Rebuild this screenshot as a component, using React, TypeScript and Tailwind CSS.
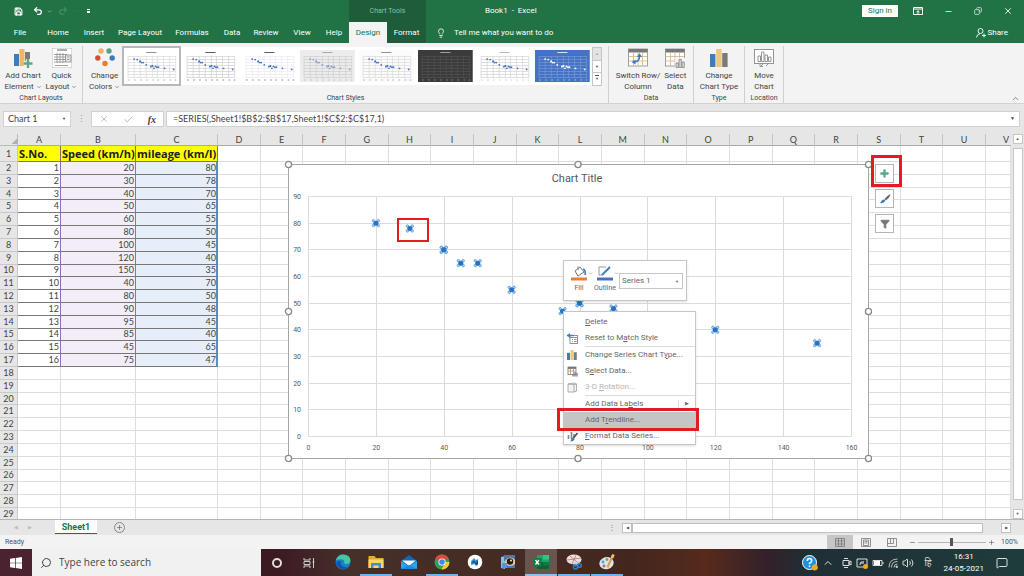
import React from 'react';
import {
  Save, Undo2, Redo2, ChevronDown, ChevronUp, Lightbulb, X, Check, Search,
  Minus, Plus, Copy, Filter, Volume2, MessageSquare,
} from 'lucide-react';

const TABS = [
  { name: 'File', cls: 'w-10' },
  { name: 'Home', cls: 'w-9' },
  { name: 'Insert', cls: 'w-9' },
  { name: 'Page Layout', cls: 'w-14' },
  { name: 'Formulas', cls: 'w-12' },
  { name: 'Data', cls: 'w-8' },
  { name: 'Review', cls: 'w-9' },
  { name: 'View', cls: 'w-9' },
  { name: 'Help', cls: 'w-7' },
];

const DATA: number[][] = [
  [20, 80], [30, 78], [40, 70], [50, 65], [60, 55], [80, 50], [100, 45], [120, 40],
  [150, 35], [40, 70], [80, 50], [90, 48], [95, 45], [85, 40], [45, 65], [75, 47],
];

const COLUMNS = 'ABCDEFGHIJKLMNOPQRSTUV'.split('');
const EMPTY_COLUMNS = COLUMNS.slice(3);
const ROWS = Array.from({ length: 28 }, (_, i) => i + 2);

const THUMBS = [
  { bg: '#ffffff', grid: '#d4d4d4', dot: '#4472c4', text: '#777777' },
  { bg: '#ffffff', grid: '#c8c8c8', dot: '#4472c4', text: '#333333' },
  { bg: '#ffffff', grid: '#e4e8f2', dot: '#4472c4', text: '#333333' },
  { bg: '#ececec', grid: '#c9c9c9', dot: '#8f9fc4', text: '#999999' },
  { bg: '#fbfbfb', grid: '#d6d6d6', dot: '#4472c4', text: '#777777' },
  { bg: '#3b3b3b', grid: '#555555', dot: '#474747', text: '#bbbbbb' },
  { bg: '#ffffff', grid: '#cccccc', dot: '#4472c4', text: '#aaaaaa' },
  { bg: '#4472c4', grid: '#7f9fd8', dot: '#ffffff', text: '#ffffff' },
];

const Thumb: React.FC<{ style: (typeof THUMBS)[number] }> = ({ style }) => (
  <svg viewBox="0 0 54 32" className="block h-8 w-full" preserveAspectRatio="none">
    <rect width="54" height="32" fill={style.bg} />
    <rect x="22" y="2" width="10" height="1" fill={style.text} opacity="0.8" />
    {[6, 9, 12, 15, 18, 21, 24, 27].map((y) => (
      <path key={y} d={`M4 ${y}.5H51`} stroke={style.grid} strokeWidth="0.6" />
    ))}
    {[4, 10, 16, 22, 28, 33, 39, 45, 51].map((x) => (
      <path key={x} d={`M${x} 6.5V28`} stroke={style.grid} strokeWidth="0.6" />
    ))}
    {[4, 10, 16, 22, 28, 33, 39, 45, 50].map((x) => (
      <rect key={x} x={x} y="29.5" width="1.5" height="1" fill={style.text} opacity="0.6" />
    ))}
    {DATA.map(([x, y], i) => (
      <circle key={i} cx={4 + x * 0.3} cy={27.5 - y * 0.23} r="0.9" fill={style.dot} />
    ))}
  </svg>
);

const BarsIcon: React.FC<{ className?: string }> = ({ className }) => (
  <svg viewBox="0 0 18 18" className={className}>
    <rect x="0" y="5" width="5.4" height="13" fill="#3f7cb8" />
    <rect x="6.2" y="0" width="5.4" height="18" fill="#ecc77c" />
    <rect x="12.2" y="4" width="5.4" height="14" fill="#7b7b7b" />
  </svg>
);

const AddElementIcon = () => (
  <svg viewBox="0 0 20 20" className="h-5 w-5">
    <rect x="1" y="6" width="5" height="12" fill="#3f7cb8" />
    <rect x="6.5" y="1" width="5" height="17" fill="#ecb865" />
    <rect x="12" y="4" width="5" height="13" fill="#7b7b7b" />
    <path d="M15 11v9M10.500 15.500h9" stroke="#f3f3f3" strokeWidth="4.500" />
    <path d="M15 11v9M10.500 15.500h9" stroke="#5fa588" strokeWidth="2.400" />
  </svg>
);

const QuickLayoutIcon = () => (
  <svg viewBox="0 0 20 20" className="h-5 w-5" fill="none" stroke="#8a8a8a" strokeWidth="0.8">
    <rect x="0" y="0" width="20" height="20" fill="#fff" stroke="#aaa" />
    <path d="M5 2h10" strokeWidth="1.4" />
    <path d="M2 6.500h13M2 9h13M2 11.500h13M2 14h11M5 5v10M8 5v10M11 5v10" />
    <rect x="13.500" y="7" width="5.500" height="7" fill="#e8e8e8" />
    <path d="M15 9h2.500M15 11.500h2.500M3 17.500h13" />
  </svg>
);

const ColorsIcon = () => (
  <svg viewBox="0 0 20 20" className="h-5 w-5">
    <circle cx="6" cy="3" r="2.700" fill="#ecb065" />
    <circle cx="14" cy="3" r="2.700" fill="#5c9f87" />
    <circle cx="2.800" cy="10" r="2.700" fill="#cf5234" />
    <circle cx="17.200" cy="10" r="2.700" fill="#3f78b8" />
    <circle cx="10" cy="15.500" r="2.700" fill="#e57f2b" />
  </svg>
);

const GridSheet = () => (
  <>
    <rect x="0.500" y="1" width="19" height="17" fill="#fff" stroke="#8a8a8a" strokeWidth="0.800" />
    <rect x="0.500" y="1" width="19" height="3.500" fill="#777" />
    <path d="M1 8.500h18M1 13h18M5.500 5v13M10 5v13M14.500 5v13" stroke="#d8b98c" strokeWidth="0.900" />
  </>
);

const SwitchIcon = () => (
  <svg viewBox="0 0 20 20" className="h-5 w-5" fill="none">
    <GridSheet />
    <path d="M6 14q5.500 0 5.500-6" stroke="#3f7cb8" strokeWidth="1.600" />
    <path d="M9 9l2.500-4L14 9zM7.500 11.500l-4 2.500 4 2.500z" fill="#3f7cb8" />
  </svg>
);

const SelectDataIcon = () => (
  <svg viewBox="0 0 20 20" className="h-5 w-5" fill="none">
    <GridSheet />
    <rect x="10" y="10" width="10" height="10" fill="#f3f3f3" />
    <path d="M11 15h2.300v4.500H11zM14 11.500h2.300v8H14zM17 14h2.300v5.500H17z" fill="#ddd" stroke="#777" strokeWidth="0.700" />
  </svg>
);

const MoveIcon = () => (
  <svg viewBox="0 0 20 20" className="h-5 w-5" fill="none" stroke="#8a8a8a" strokeWidth="0.900">
    <rect x="0.500" y="1.500" width="19" height="14" fill="#fff" />
    <path d="M4 8h2.500v5.500H4zM7.500 4H10v9.500H7.500zM11 7h2.500v6.500H11zM14.500 9H17v4.500h-2.500z" />
    <path d="M6 15.500v3h3M9 15.500l-2 3M12 18l3-3" />
  </svg>
);

const RibbonButton: React.FC<{ icon: React.ReactNode; lines: string[]; menu?: boolean }> = ({ icon, lines, menu }) => (
  <button className="flex flex-col items-center pt-0.5 text-[8px] leading-[11px] whitespace-nowrap text-[#444]">
    <span className="mb-0.5 flex h-5 items-center">{icon}</span>
    <span>{lines[0]}</span>
    <span className="flex items-center gap-[2px]">
      {lines[1]}
      {menu && <ChevronDown size={6} />}
    </span>
  </button>
);

const Group: React.FC<{ label: string; className?: string; children: React.ReactNode }> = ({ label, className, children }) => (
  <section className={`mt-[3px] flex flex-col justify-between border-r border-[#cfcfcf] ${className}`}>
    <div className="flex justify-center">{children}</div>
    <h2 className="text-center text-[7px] leading-[9px] text-[#444]">{label}</h2>
  </section>
);

const UserIcon = () => (
  <svg viewBox="0 0 10 10" className="h-2.5 w-2.5" fill="none" stroke="#fff" strokeWidth="0.900">
    <circle cx="4.500" cy="3" r="2.500" />
    <path d="M.5 9.500Q1 6 4 5.700M8 5.500v4M6 7.500h4" />
  </svg>
);

const TitleBar = () => (
  <header className="h-[43px] shrink-0 bg-[#217346] text-white">
    <div className="flex h-[22px] items-center">
      <div className="flex w-[349px] items-center">
        <button aria-label="Save" className="ml-3.5"><Save size={9} strokeWidth={3} /></button>
        <button aria-label="Undo" className="ml-2.5"><Undo2 size={10} strokeWidth={3} /></button>
        <ChevronDown size={5} className="ml-1" />
        <button aria-label="Redo" className="ml-1.5 text-[#4b8f6a]"><Redo2 size={10} strokeWidth={2.5} /></button>
        <ChevronDown size={5} className="ml-1 text-[#4b8f6a]" />
        <button aria-label="Customize toolbar" className="ml-2.5 flex flex-col items-center gap-px">
          <span className="h-px w-[3px] bg-white" />
          <span className="h-0.5 w-[3px] bg-white" />
        </button>
      </div>
      <div className="flex h-full w-[77px] items-center justify-center bg-[#1e5c3a] text-[7px] text-[#8fbfa3]">Chart Tools</div>
      <h1 className="ml-[59px] flex-1 text-[8px] whitespace-pre">Book1  -  Excel</h1>
      <div className="flex items-center">
        <button className="h-3 w-9 bg-white text-[8px] leading-[12px] text-[#217346]">Sign in</button>
        <button aria-label="Ribbon display options" className="ml-[15px]">
          <svg viewBox="0 0 10 8" className="h-2 w-2.5" fill="none" stroke="#fff"><path d="M.5.500h9v7h-9zM.5 2h9M5 7V4M3.500 5L5 3.700 6.500 5" /></svg>
        </button>
        <button aria-label="Minimize" className="ml-[21px]"><Minus size={9} /></button>
        <button aria-label="Restore" className="ml-[21px]"><Copy size={8} className="rotate-90" /></button>
        <button aria-label="Close" className="mr-[11px] ml-[21px]"><X size={10} /></button>
      </div>
    </div>
    <nav className="flex h-[21px] items-stretch text-[8px]">
      <div className="flex w-[349px] items-stretch">
        {TABS.map((tab) => (
          <button key={tab.name} className={`${tab.cls} whitespace-nowrap`}>{tab.name}</button>
        ))}
      </div>
      <button className="w-[38px] bg-[#f3f3f3] text-[#217346]">Design</button>
      <button className="w-[39px] bg-[#1e5c3a]">Format</button>
      <button className="ml-2.5 flex flex-1 items-center gap-2">
        <Lightbulb size={10} />
        Tell me what you want to do
      </button>
      <button className="mr-4 flex items-center gap-0.5"><UserIcon />Share</button>
    </nav>
  </header>
);

const Ribbon = () => (
  <div className="flex h-[61px] shrink-0 border-b border-[#d2d2d2] bg-[#f3f3f3]">
    <Group label="Chart Layouts" className="w-[83px]">
      <div className="flex gap-1">
        <RibbonButton icon={<AddElementIcon />} lines={['Add Chart', 'Element']} menu />
        <RibbonButton icon={<QuickLayoutIcon />} lines={['Quick', 'Layout']} menu />
      </div>
    </Group>
    <Group label="Chart Styles" className="w-[526px]">
      <div className="flex w-full pr-1.5 pl-1.5">
        <RibbonButton icon={<ColorsIcon />} lines={['Change', 'Colors']} menu />
        <div className="mt-px ml-0.5 flex h-[38px] flex-1 items-center bg-white">
          {THUMBS.map((style, i) => (
            <button key={i} aria-label={`Style ${i + 1}`} className={`flex-1 border-2 ${i === 0 ? 'border-[#b8b8b8] py-0.5' : 'border-transparent'}`}>
              <Thumb style={style} />
            </button>
          ))}
        </div>
        <div className="mt-px flex h-[39px] w-2.5 flex-col border border-[#c6c6c6] bg-white text-[4px] text-[#555]">
          <button aria-label="Previous styles" className="flex-1 bg-[#e3e3e3] text-[#aaa]">▲</button>
          <button aria-label="Next styles" className="flex-1 border-y border-[#c6c6c6]">▼</button>
          <button aria-label="More styles" className="flex-1"><span className="border-t border-[#555]">▼</span></button>
        </div>
      </div>
    </Group>
    <Group label="Data" className="w-[85px]">
      <div className="flex gap-1">
        <RibbonButton icon={<SwitchIcon />} lines={['Switch Row/', 'Column']} />
        <RibbonButton icon={<SelectDataIcon />} lines={['Select', 'Data']} />
      </div>
    </Group>
    <Group label="Type" className="w-[51px]">
      <RibbonButton icon={<BarsIcon className="h-[18px] w-[18px]" />} lines={['Change', 'Chart Type']} />
    </Group>
    <Group label="Location" className="w-[39px]">
      <RibbonButton icon={<MoveIcon />} lines={['Move', 'Chart']} />
    </Group>
    <button aria-label="Collapse the ribbon" className="mr-1 ml-auto self-end text-[#666]"><ChevronUp size={9} /></button>
  </div>
);

const FormulaBar = () => (
  <div className="flex h-[30px] shrink-0 items-center bg-[#e6e6e6] pr-1 pl-[3px] font-['Lato',sans-serif] text-[9px] text-[#444]">
    <div className="flex h-4 w-[68px] items-center border border-[#d0d0d0] bg-white px-1">
      <input aria-label="Name box" defaultValue="Chart 1" className="min-w-0 flex-1 bg-transparent outline-none" />
      <span className="text-[4px]">▼</span>
    </div>
    <span className="w-5 text-center text-[#999]">⋮</span>
    <div className="flex h-4 w-[73px] items-center justify-between border border-[#d0d0d0] bg-white px-[7px]">
      <button aria-label="Cancel" className="text-[#b0b0b0]"><X size={10} /></button>
      <button aria-label="Enter" className="text-[#b0b0b0]"><Check size={11} /></button>
      <button className="font-['Liberation_Serif',serif] text-[10px] font-bold italic">fx</button>
    </div>
    <div className="ml-0.5 flex h-4 flex-1 items-center border border-[#d0d0d0] bg-white pr-1 pl-1.5">
      <input aria-label="Formula bar" defaultValue="=SERIES(,Sheet1!$B$2:$B$17,Sheet1!$C$2:$C$17,1)" className="min-w-0 flex-1 bg-transparent outline-none" />
      <span className="text-[5px]">▼</span>
    </div>
  </div>
);

const SheetTable = () => (
  <table className="h-[calc(100%+2px)] w-full table-fixed border-separate border-spacing-0 font-['Lato',sans-serif] text-[9px] leading-[10px] text-[#444]">
    <colgroup>
      <col className="w-[18px]" />
      <col className="w-[43px]" />
      <col className="w-[75px]" />
      <col className="w-[82px]" />
      {EMPTY_COLUMNS.map((c) => <col key={c} className={c === 'V' ? 'w-[25px]' : ''} />)}
    </colgroup>
    <thead>
      <tr className="h-3 bg-[#e6e6e6]">
        <th className="border-r border-b border-[#bbb] p-0 text-right"><span className="block text-[7px] leading-[8px] text-[#b0b0b0]">◢</span></th>
        {COLUMNS.map((c) => (
          <th key={c} className={`border-b border-[#aaa] p-0 font-normal ${c === 'V' ? 'pr-0.5 text-right' : 'border-r border-r-[#c4c4c4]'}`}>{c}</th>
        ))}
      </tr>
    </thead>
    <tbody>
      <tr className="h-4">
        <th className="border-r border-b border-[#c9c9c9] bg-[#e6e6e6] p-0 font-normal">1</th>
        {['S.No.', 'Speed (km/h)', 'mileage (km/l)'].map((h) => (
          <td key={h} className="border-r border-b border-[#777] bg-[#ffff00] p-0 pl-px font-['Open_Sans',sans-serif] text-[11px] leading-[14px] font-bold whitespace-nowrap text-[#222]">{h}</td>
        ))}
        {EMPTY_COLUMNS.map((c) => <td key={c} className="border-r border-b border-[#dedede] p-0" />)}
      </tr>
      {ROWS.map((row) => {
        const point = DATA[row - 2];
        return (
          <tr key={row}>
            <th className="border-r border-b border-[#c9c9c9] bg-[#e6e6e6] p-0 font-normal">{row}</th>
            {point ? (
              <>
                <td className="border-r border-b border-r-[#8f6fb8] border-b-[#777] p-0 pr-px text-right">{row - 1}</td>
                <td className="border-r border-b border-r-[#8f6fb8] border-b-[#777] bg-[#f2edf7] p-0 pr-px text-right">{point[0]}</td>
                <td className="border-r-2 border-b border-r-[#5b8dbd] border-b-[#777] bg-[#e6eff9] p-0 text-right">{point[1]}</td>
              </>
            ) : (
              <>
                <td className="border-r border-b border-[#dedede] p-0" />
                <td className="border-r border-b border-[#dedede] p-0" />
                <td className="border-r border-b border-[#dedede] p-0" />
              </>
            )}
            {EMPTY_COLUMNS.map((c) => <td key={c} className="border-r border-b border-[#dedede] p-0" />)}
          </tr>
        );
      })}
    </tbody>
  </table>
);

const px = (v: number) => 24.5 + v * 3.394;
const py = (v: number) => 276.5 - v * 2.667;

const Marker: React.FC<{ x: number; y: number }> = ({ x, y }) => (
  <g transform={`translate(${px(x) - 0.5} ${py(y)})`}>
    {[[-2.4, -2.4], [2.4, -2.4], [-2.4, 2.4], [2.4, 2.4]].map(([dx, dy], i) => (
      <circle key={i} cx={dx} cy={dy} r="1.300" fill="#a9d2f2" stroke="#4a98da" strokeWidth="0.700" />
    ))}
    <circle r="2.500" fill="#2b70c2" />
  </g>
);

const Chart = () => (
  <svg width="588" height="303" viewBox="0 0 588 303" className="block" fontSize="7" fill="#595959">
    <rect x="4.500" y="4.500" width="580" height="294" fill="#fff" stroke="#a6a6a6" />
    <text x="293" y="22" textAnchor="middle" fontSize="11">Chart Title</text>
    {[0, 10, 20, 30, 40, 50, 60, 70, 80, 90].map((v) => (
      <g key={v}>
        <path d={`M24.500 ${Math.floor(py(v)) + 0.5}H567.500`} stroke="#dcdcdc" />
        <text x="17" y={py(v) + 2.5} textAnchor="end">{v}</text>
      </g>
    ))}
    {[0, 20, 40, 60, 80, 100, 120, 140, 160].map((v) => (
      <g key={v}>
        <path d={`M${Math.floor(px(v)) + 0.5} 36.500V276.500`} stroke="#dcdcdc" />
        <text x={px(v)} y="290" textAnchor="middle">{v}</text>
      </g>
    ))}
    {DATA.map(([x, y], i) => <Marker key={i} x={x} y={y} />)}
    {[[4.5, 4.5], [294, 4.5], [584.5, 4.5], [4.5, 151.5], [584.5, 151.5], [4.5, 298.5], [294, 298.5], [584.5, 298.5]].map(([x, y], i) => (
      <circle key={i} cx={x} cy={y} r="3.100" fill="#fff" stroke="#8a8a8a" strokeWidth="1.300" />
    ))}
  </svg>
);

const ResetIcon = () => (
  <svg viewBox="0 0 11 11" className="h-[11px] w-[11px]" fill="none">
    <rect x="3" y="2.500" width="7.500" height="8" fill="#fff" stroke="#777" strokeWidth="0.800" />
    <path d="M3 4.500h7M5 6.500h1M7 6.500h2.500M5 8.500h1M7 8.500h2.500" stroke="#777" strokeWidth="0.800" />
    <path d="M0 2.500h6.500" stroke="#3f7cb8" strokeWidth="1.500" />
    <path d="M3 0L0 2.500 3 5z" fill="#3f7cb8" />
  </svg>
);

const TableIcon = () => (
  <svg viewBox="0 0 11 11" className="h-[11px] w-[11px]" fill="none">
    <rect x="1" y="1" width="8" height="7.500" fill="#fff" stroke="#777" strokeWidth="0.800" />
    <path d="M1 2h8" stroke="#666" strokeWidth="1.600" />
    <path d="M1 5h8M3.500 3v5M6.500 3v5" stroke="#c98b6a" strokeWidth="0.800" />
    <path d="M6 10.500V8M8 10.500V6M10 10.500V7" stroke="#777" strokeWidth="1.300" />
  </svg>
);

const CubeIcon = () => (
  <svg viewBox="0 0 11 11" className="h-[11px] w-[11px]" fill="#f6f1f6" stroke="#a9a3ab" strokeWidth="0.900">
    <path d="M1 2l6-1 2.500 1v7L7 10H1zM7 2.500V10M1 2l6 .5L9.500 2" />
  </svg>
);

const FormatIcon = () => (
  <svg viewBox="0 0 11 11" className="h-[11px] w-[11px]" fill="none">
    <path d="M1.500 8V4M4.500 8V1M7 7V3" stroke="#888" strokeWidth="1.600" />
    <path d="M10.500 2L6 7.500" stroke="#555" strokeWidth="1.800" />
    <path d="M6.500 6.500Q4 7 3.500 10.500 7 10 7.500 8z" fill="#3f7cb8" />
  </svg>
);

const MENU: { pre: string; key: string; post: string; icon?: React.ReactNode; state?: string; sub?: boolean; rule?: boolean }[] = [
  { pre: '', key: 'D', post: 'elete' },
  { pre: 'Reset to M', key: 'a', post: 'tch Style', icon: <ResetIcon />, rule: true },
  { pre: 'Change Series Chart T', key: 'y', post: 'pe...', icon: <BarsIcon className="h-[10px] w-[10px]" /> },
  { pre: 'S', key: 'e', post: 'lect Data...', icon: <TableIcon /> },
  { pre: '3-D ', key: 'R', post: 'otation...', icon: <CubeIcon />, state: 'text-[#b5b5b5]', rule: true },
  { pre: 'Add Data La', key: 'b', post: 'els', sub: true },
  { pre: 'Add T', key: 'r', post: 'endline...', state: 'bg-[#c5c5c5]' },
  { pre: '', key: 'F', post: 'ormat Data Series...', icon: <FormatIcon /> },
];

const ContextMenu = () => (
  <ul className="w-[133px] border border-[#c6c6c6] bg-white pt-0.5 text-[8px] text-[#666] shadow-sm">
    {MENU.map((item) => (
      <li key={item.key}>
        <button className={`flex h-4 w-full items-center text-left whitespace-nowrap ${item.state ?? ''}`}>
          <span className="flex w-[21px] pl-[3px]">{item.icon}</span>
          <span className="flex-1">{item.pre}<u>{item.key}</u>{item.post}</span>
          {item.sub && <span className="mr-1.5 border-l border-[#e0e0e0] pl-1.5 text-[5px]">▶</span>}
        </button>
        {item.rule && <hr className="ml-[21px] border-[#dcdcdc]" />}
      </li>
    ))}
  </ul>
);

const MiniToolbar = () => (
  <div className="flex h-[41px] w-[124px] border border-[#c6c6c6] bg-white pt-1 pl-1.5 text-[7px] text-[#666] shadow-sm">
    <button className="flex w-[26px] flex-col items-start">
      <span className="flex items-center">
        <svg viewBox="0 0 18 16" className="h-4 w-[18px]" fill="none">
          <path d="M5 6l5-4 4 5-6 4z" fill="#fff" stroke="#777" />
          <path d="M8 5V1.500" stroke="#777" />
          <path d="M13 4q3 1 2 6" stroke="#3f7cb8" strokeWidth="1.600" />
          <path d="M1 14h16" stroke="#ed7d31" strokeWidth="3" />
        </svg>
        <ChevronDown size={5} />
      </span>
      <span className="w-[18px] pt-0.5 text-center">Fill</span>
    </button>
    <button className="flex w-[23px] flex-col items-start">
      <span className="flex items-center">
        <svg viewBox="0 0 18 16" className="h-4 w-[18px]" fill="none">
          <path d="M10 2H3v8h3" stroke="#999" />
          <path d="M14 2L6 10" stroke="#3f7cb8" strokeWidth="2" />
          <path d="M1 14h16" stroke="#4472c4" strokeWidth="3" />
        </svg>
        <ChevronDown size={5} />
      </span>
      <span className="flex w-[18px] justify-center pt-0.5 whitespace-nowrap">Outline</span>
    </button>
    <div className="relative mt-2 h-4 w-16">
      <select aria-label="Chart element" className="h-4 w-full appearance-none border border-[#c6c6c6] bg-white pl-0.5 text-[8px] leading-[14px]">
        <option>Series 1</option>
      </select>
      <span className="pointer-events-none absolute top-1.5 right-1 text-[4px] leading-[5px]">▼</span>
    </div>
  </div>
);

const SIDE = 'flex h-[19px] w-[19px] items-center justify-center border border-[#b5b5b5] bg-white';

const Sheet = () => (
  <main className="flex min-h-0 flex-1 bg-white">
    <div className="relative min-w-0 flex-1 overflow-hidden">
      <SheetTable />
      <div className="absolute top-[26px] left-[284px]"><Chart /></div>
      <div className="absolute top-[30px] left-[875px] flex flex-col gap-[6px]">
        <button aria-label="Chart elements" className={SIDE}><Plus size={11} strokeWidth={5} className="text-[#5fa588]" /></button>
        <button aria-label="Chart style" className={SIDE}>
          <svg viewBox="0 0 12 12" className="h-3 w-3">
            <path d="M11.500 1Q9 2 5.500 6l1.500 1.500Q11 4 11.500 1z" fill="#666" />
            <path d="M5 6.300Q3 6.500 1 10q4 .7 5.500-2.200z" fill="#3f7cb8" />
          </svg>
        </button>
        <button aria-label="Chart filters" className={SIDE}><Filter size={10} className="fill-[#777] text-[#777]" /></button>
      </div>
      <div className="absolute top-[126px] left-[563px]"><MiniToolbar /></div>
      <div className="absolute top-[177px] left-[563px]"><ContextMenu /></div>
      <div className="pointer-events-none absolute top-[84px] left-[397px] h-6 w-8 border-2 border-[#e31b23]" />
      <div className="pointer-events-none absolute top-[21px] left-[871px] h-8 w-[31px] border-3 border-[#e31b23]" />
      <div className="pointer-events-none absolute top-[274px] left-[557px] h-[23px] w-[142px] border-3 border-[#e31b23]" />
    </div>
    <div className="flex w-[13px] flex-col items-center bg-[#e6e6e6] text-[4px] text-[#555]">
      <button aria-label="Scroll up" className="h-2.5 w-2.5 border border-[#c6c6c6] bg-white">▲</button>
      <div className="my-1 h-[352px] w-2.5 border border-[#c6c6c6] bg-white" />
      <button aria-label="Scroll down" className="mt-auto h-2.5 w-2.5 border border-[#c6c6c6] bg-white">▼</button>
    </div>
  </main>
);

const SheetTabs = () => (
  <div className="flex h-4 shrink-0 items-center border-t border-[#b5b5b5] bg-[#e6e6e6] text-[#555]">
    <div className="flex w-[55px] gap-2.5 pl-3.5 text-[5px] text-[#bbb]"><span>◀</span><span>▶</span></div>
    <button className="h-[14px] w-[42px] self-start border-b border-[#217346] bg-white text-[9px] leading-[12px] font-bold text-[#217346]">Sheet1</button>
    <button aria-label="New sheet" className="ml-[17px] flex h-[11px] w-[11px] items-center justify-center rounded-full border border-[#888]"><Plus size={7} /></button>
    <span className="ml-auto w-[14px] text-[8px] text-[#888]">⋮</span>
    <div className="mr-[13px] flex w-[389px] items-center text-[4px]">
      <button aria-label="Scroll left" className="h-2.5 w-2.5 border border-[#c0c0c0] bg-white">◀</button>
      <div className="h-2.5 w-[351px] border border-[#c0c0c0] bg-white" />
      <button aria-label="Scroll right" className="ml-auto h-2.5 w-2.5 border border-[#c0c0c0] bg-white">▶</button>
    </div>
  </div>
);

const StatusBar = () => (
  <div className="flex h-[14px] shrink-0 items-center bg-[#f3f3f3] text-[7px] text-[#555]">
    <span className="flex-1 pl-[5px]">Ready</span>
    <button aria-label="Normal view" className="flex h-full w-[26px] items-center justify-center bg-[#c6c6c6]">
      <svg viewBox="0 0 10 9" className="h-[9px] w-2.5" fill="none" stroke="#777" strokeWidth="0.800"><path d="M.5.500h9v8h-9zM.5 3h9M.5 6h9M3.500.500v8M6.500.500v8" /></svg>
    </button>
    <button aria-label="Page layout view" className="flex w-[26px] justify-center">
      <svg viewBox="0 0 10 9" className="h-[9px] w-2.5" fill="none" stroke="#777" strokeWidth="0.800"><path d="M.5.500h9v8h-9zM2.500 2h5v5.500h-5zM3.500 3.500h3M3.500 5h3" /></svg>
    </button>
    <button aria-label="Page break view" className="flex w-[26px] justify-center">
      <svg viewBox="0 0 10 9" className="h-[9px] w-2.5" fill="none" stroke="#777" strokeWidth="0.800"><path d="M.5.500h9v8h-9zM3.500.500v5h3v-5M.5 5.500h3" /></svg>
    </button>
    <button aria-label="Zoom out" className="ml-1"><Minus size={7} /></button>
    <div className="relative mx-0.5 flex h-2 w-[68px] items-center">
      <div className="h-px w-full bg-[#b5b5b5]" />
      <input type="range" aria-label="Zoom" defaultValue={50} className="absolute inset-0 w-full opacity-0" />
      <span className="pointer-events-none absolute left-8 h-2 w-[3px] bg-[#555]" />
    </div>
    <button aria-label="Zoom in"><Plus size={7} /></button>
    <span className="w-[29px] pr-1.5 text-right">100%</span>
  </div>
);

const APPS: { name: string; open: string; icon: React.ReactNode }[] = [
  {
    name: 'Edge', open: 'border-transparent',
    icon: <><circle cx="8" cy="8" r="7.500" fill="#1b7fd0" /><path d="M1 6Q3 .5 8 .5q7 0 7.500 6Q15 10 11 10 8 9 9.500 7 8 4 1 6z" fill="#43c9a0" /><path d="M6 7q-2 6 7.500 6.500Q5 18 1 10q1-4 5-3z" fill="#1257a6" /></>,
  },
  {
    name: 'File Explorer', open: 'border-[#76b0e8]',
    icon: <><path d="M.5 2h6l1.500 2h7.500v10H.5z" fill="#e8ab32" /><path d="M.5 5.500h15V14H.5z" fill="#fcd56b" /><path d="M3 14V9h10v5h-2.500v-2.500h-5V14z" fill="#3b94d9" /></>,
  },
  {
    name: 'Mail', open: 'border-transparent',
    icon: <><path d="M0 7l8-6 8 6v8H0z" fill="#1565b5" /><path d="M1 6.500h14L8 12z" fill="#f2f6fa" /><path d="M0 7l8 5.500L0 15zM16 7l-8 5.500 8 2.500z" fill="#2ba4ee" /><path d="M0 15l8-4 8 4z" fill="#1e88dc" /></>,
  },
  {
    name: 'Chrome', open: 'border-[#76b0e8]',
    icon: <><circle cx="8" cy="8" r="7.500" fill="#34a056" /><path d="M8 8h7.500A7.500 7.500 0 0 1 7.500 15.500L11 9z" fill="#fbc934" /><path d="M1.500 4.200A7.500 7.500 0 0 1 14.800 5H8L5 9z" fill="#df4a3c" /><circle cx="8" cy="8" r="3.600" fill="#fff" /><circle cx="8" cy="8" r="2.800" fill="#4285f4" /></>,
  },
  {
    name: 'Notes', open: 'border-transparent',
    icon: <><circle cx="8" cy="8" r="7.300" fill="#fff" /><path d="M4 7l3-3 2 2 2-1v6l-2 1-2-2-2 1H4z" fill="#3aa0dc" /><path d="M5 8l2-2 2 3 1-3 1 1v3l-2 1-2-3-1 2z" fill="#17488c" /></>,
  },
  {
    name: 'Photo Viewer', open: 'border-transparent',
    icon: <><path d="M1 3l4-1v13l-4-1z" fill="#8dbce8" /><rect x="4" y="1" width="11" height="13" fill="#4879b5" /><path d="M4 8q6-8 11-2v4q-6 5-11-2z" fill="#e9c9a0" /><circle cx="10" cy="7.500" r="3.200" fill="#2b1a14" /><circle cx="11" cy="6.500" r="0.900" fill="#fff" /><path d="M2 9h5v5H2z" fill="#5796d6" /></>,
  },
  {
    name: 'Excel', open: 'border-[#8fc1ee] bg-[#6a5450]',
    icon: <><rect x="4" y="1" width="12" height="14" rx="1" fill="#21a366" /><path d="M10 1h6v4.500h-6z" fill="#33c481" /><path d="M4 8h12v6q0 1-1 1H4z" fill="#185c37" /><path d="M10 8h6v3.500h-6z" fill="#107c41" /><rect x="0" y="4" width="8.500" height="8.500" rx="1" fill="#107c41" /><path d="M2.500 6l3.500 4.500M6 6l-3.500 4.500" stroke="#fff" strokeWidth="1.300" /></>,
  },
  {
    name: 'Snipping Tool', open: 'border-[#76b0e8]',
    icon: <><ellipse cx="8" cy="5.500" rx="7.500" ry="5" fill="#e9e2e0" /><path d="M1 6l14-2M4 2l8 7M10 1L6 10" stroke="#c55a4a" strokeWidth="0.700" /><path d="M7 8l5 3M13 7l-4 5" stroke="#ccc" strokeWidth="1.400" /><circle cx="9.500" cy="13" r="2" fill="none" stroke="#2b7fd0" strokeWidth="1.500" /><circle cx="13.500" cy="11.500" r="1.800" fill="none" stroke="#2b7fd0" strokeWidth="1.500" /></>,
  },
  {
    name: 'Paint', open: 'border-[#76b0e8]',
    icon: <><ellipse cx="7.500" cy="9" rx="7.200" ry="6" fill="#d9e5ee" transform="rotate(-15 8 9)" /><circle cx="4" cy="8" r="1.400" fill="#4a9fe0" /><circle cx="8" cy="5.500" r="1.400" fill="#57b35a" /><circle cx="5" cy="12" r="1.400" fill="#e05a4a" /><circle cx="9" cy="12.500" r="1.400" fill="#e8b93a" /><path d="M9 12l5-11" stroke="#d8994a" strokeWidth="1.900" /><path d="M13 4l1.500-3.500" stroke="#eebf7a" strokeWidth="2.600" /></>,
  },
];

const Taskbar = () => (
  <footer className="flex h-[27px] shrink-0 items-stretch bg-[linear-gradient(90deg,#3c1a22_27%,#46302a_34%,#43271f_62%,#572a1c_69%,#33202a_75%,#1f2f35_79%,#1f3c3c_100%)] text-white">
    <button aria-label="Start" className="flex w-8 items-center justify-center bg-[#4b2230]">
      <svg viewBox="0 0 12 12" className="h-3 w-3" fill="#fff"><path d="M0 1.700l5-.7v4.700H0zM5.700.900L12 0v5.700H5.700zM0 6.300h5V11l-5-.7zM5.700 6.300H12V12l-6.300-.9z" /></svg>
    </button>
    <label className="flex w-[229px] items-center bg-[#f1f1f1] pl-2 text-[#444]">
      <Search size={12} className="-scale-x-100" />
      <input aria-label="Search" placeholder="Type here to search" className="ml-[7px] min-w-0 flex-1 bg-transparent font-['Open_Sans',sans-serif] text-[10px] outline-none placeholder:text-[#444]" />
    </label>
    <button aria-label="Cortana" className="flex w-8 items-center justify-center"><span className="h-2.5 w-2.5 rounded-full border-2 border-[#ddd]" /></button>
    <button aria-label="Task view" className="mr-0.5 flex w-8 items-center justify-center">
      <svg viewBox="0 0 12 12" className="h-3 w-3" fill="none" stroke="#ccc"><path d="M1 1v2h6V1M1 11V9h6v2M1 4.500h6v3H1zM10.500 1v10M9.500 5h2" /></svg>
    </button>
    {APPS.map((app) => (
      <button key={app.name} aria-label={app.name} className={`mr-px flex w-8 items-center justify-center border-b-2 bg-clip-padding pt-px ${app.open}`}>
        <svg viewBox="0 0 16 16" className="h-4 w-4">{app.icon}</svg>
      </button>
    ))}
    <div className="ml-auto flex items-center text-[#ddd]">
      <svg viewBox="0 0 16 16" className="h-4 w-4">
        <circle cx="7.500" cy="7.500" r="7" fill="#1e93d6" stroke="#fff" />
        <path d="M5.300 6Q5.300 3.500 7.500 3.500T9.700 6Q9.700 7 7.500 8.300v1M7.500 10.500V12" stroke="#fff" strokeWidth="1.500" fill="none" />
        <circle cx="12.800" cy="12.500" r="3" fill="#f0a81e" />
      </svg>
      <ChevronUp size={12} className="ml-1" />
      <svg viewBox="0 0 10 12" className="ml-2 h-3 w-2.5" fill="none" stroke="#ddd"><path d="M2 1.500h4M2 10.500h4M1 3.500h6v5H1zM7 5l2-1v4l-2-1z" /></svg>
      <svg viewBox="0 0 12 12" className="ml-1 h-3 w-3" fill="none" stroke="#ddd"><path d="M1 2h10v8H1zM4 8q0-4 4-3M4 6h4" /><circle cx="9.500" cy="9.500" r="2.500" fill="#f0a81e" stroke="none" /></svg>
      <svg viewBox="0 0 12 8" className="ml-1 h-2 w-3" fill="none" stroke="#ddd"><path d="M1 1.500h9v5H1zM11 3v2" /><path d="M2 4h6" stroke="#fff" strokeWidth="4" /></svg>
      <svg viewBox="0 0 10 10" className="ml-1 h-2.5 w-2.5" fill="none" stroke="#bbb"><path d="M1 9.500Q1 1 9.500 1M3.500 9.500q0-6 6-6M6 9.500Q6 6 9.500 6" /><circle cx="8.800" cy="8.800" r="0.900" fill="#fff" /></svg>
      <Volume2 size={12} className="ml-1" />
      <span className="ml-2.5 font-['Open_Sans','Noto_Sans',sans-serif] text-[9px]">हि</span>
      <time className="ml-3 text-center text-[8px] leading-[12px] text-white">16:31<br />24-05-2021</time>
      <button aria-label="Notifications" className="mr-4 ml-3"><MessageSquare size={12} /></button>
    </div>
  </footer>
);

const App: React.FC = () => (
  <div className="flex h-screen flex-col overflow-hidden bg-[#e6e6e6] font-['Roboto','Noto_Sans',sans-serif]">
    <TitleBar />
    <Ribbon />
    <FormulaBar />
    <Sheet />
    <SheetTabs />
    <StatusBar />
    <Taskbar />
  </div>
);

export default App;
